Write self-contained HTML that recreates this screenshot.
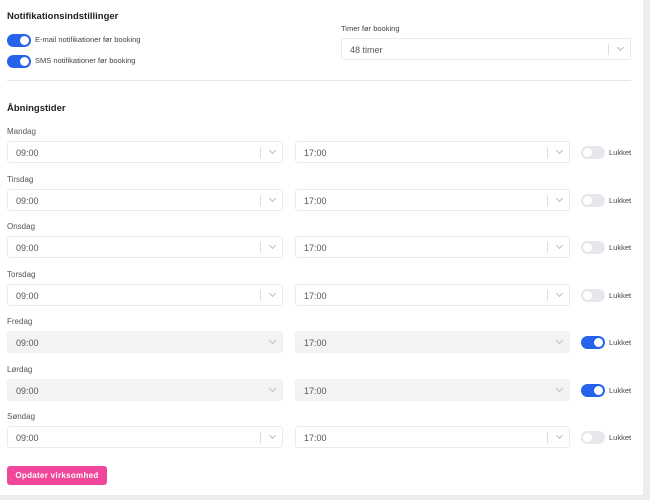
<!DOCTYPE html>
<html><head><meta charset="utf-8">
<style>
*{box-sizing:border-box;margin:0;padding:0}
body{width:650px;height:500px;background:#ededef;font-family:"Liberation Sans",sans-serif;color:#333;position:relative;overflow:hidden}
.card{position:absolute;left:0;top:0;width:643px;height:495px;background:#fff}
.abs{position:absolute}
.h{font-size:9.5px;font-weight:bold;color:#222}
.lbl{font-size:8px;color:#555}
.sm{font-size:7.5px;color:#444}
.tg{position:absolute;width:24px;height:13px;border-radius:7px;background:#2563eb}
.tg::after{content:"";position:absolute;right:2px;top:2px;width:9px;height:9px;border-radius:50%;background:#fff}
.tg.off{background:#e5e7eb}
.tg.off::after{left:2px;right:auto}
.sel{position:absolute;height:22px;border:1px solid #ebebeb;border-radius:3px;background:#fff;font-size:9px;color:#555;padding:6px 0 0 8px}
.sel.dis{background:#f2f3f5;border-color:#f0f0f0}
.sel .bar{position:absolute;right:21px;top:5px;width:1px;height:11px;background:#ddd}
.sel.dis .bar{display:none}
.sel .ch{position:absolute;right:7px;top:6px;width:5px;height:5px;border-right:1px solid #bbb;border-bottom:1px solid #bbb;transform:rotate(45deg)}
.btn{position:absolute;left:7px;top:466px;width:100px;height:19px;background:#f0479b;border-radius:3px;color:#fff;font-size:8px;font-weight:bold;text-align:center;line-height:19px;letter-spacing:.3px}
</style></head><body>
<div class="card">
<div class="abs h" style="left:7px;top:11px">Notifikationsindstillinger</div>
<div class="tg" style="left:7px;top:34px"></div><div class="abs sm" style="left:35px;top:35px">E-mail notifikationer før booking</div>
<div class="tg" style="left:7px;top:55px"></div><div class="abs sm" style="left:35px;top:56px">SMS notifikationer før booking</div>
<div class="abs sm" style="left:341px;top:24px">Timer før booking</div>
<div class="sel" style="left:341px;top:38px;width:290px">48 timer<span class="bar"></span><span class="ch"></span></div>
<div class="abs" style="left:7px;top:80px;width:624px;height:1px;background:#e6e6e6"></div>
<div class="abs h" style="left:7px;top:103px">Åbningstider</div>

<div class="abs lbl" style="left:7px;top:127px">Mandag</div>
<div class="sel" style="left:7px;top:141px;width:276px">09:00<span class="bar"></span><span class="ch"></span></div>
<div class="sel" style="left:295px;top:141px;width:275px">17:00<span class="bar"></span><span class="ch"></span></div>
<div class="tg off" style="left:581px;top:146px"></div><div class="abs sm" style="left:609px;top:148px">Lukket</div>

<div class="abs lbl" style="left:7px;top:175px">Tirsdag</div>
<div class="sel" style="left:7px;top:189px;width:276px">09:00<span class="bar"></span><span class="ch"></span></div>
<div class="sel" style="left:295px;top:189px;width:275px">17:00<span class="bar"></span><span class="ch"></span></div>
<div class="tg off" style="left:581px;top:194px"></div><div class="abs sm" style="left:609px;top:196px">Lukket</div>

<div class="abs lbl" style="left:7px;top:222px">Onsdag</div>
<div class="sel" style="left:7px;top:236px;width:276px">09:00<span class="bar"></span><span class="ch"></span></div>
<div class="sel" style="left:295px;top:236px;width:275px">17:00<span class="bar"></span><span class="ch"></span></div>
<div class="tg off" style="left:581px;top:241px"></div><div class="abs sm" style="left:609px;top:243px">Lukket</div>

<div class="abs lbl" style="left:7px;top:270px">Torsdag</div>
<div class="sel" style="left:7px;top:284px;width:276px">09:00<span class="bar"></span><span class="ch"></span></div>
<div class="sel" style="left:295px;top:284px;width:275px">17:00<span class="bar"></span><span class="ch"></span></div>
<div class="tg off" style="left:581px;top:289px"></div><div class="abs sm" style="left:609px;top:291px">Lukket</div>

<div class="abs lbl" style="left:7px;top:317px">Fredag</div>
<div class="sel dis" style="left:7px;top:331px;width:276px">09:00<span class="bar"></span><span class="ch"></span></div>
<div class="sel dis" style="left:295px;top:331px;width:275px">17:00<span class="bar"></span><span class="ch"></span></div>
<div class="tg" style="left:581px;top:336px"></div><div class="abs sm" style="left:609px;top:338px">Lukket</div>

<div class="abs lbl" style="left:7px;top:365px">Lørdag</div>
<div class="sel dis" style="left:7px;top:379px;width:276px">09:00<span class="bar"></span><span class="ch"></span></div>
<div class="sel dis" style="left:295px;top:379px;width:275px">17:00<span class="bar"></span><span class="ch"></span></div>
<div class="tg" style="left:581px;top:384px"></div><div class="abs sm" style="left:609px;top:386px">Lukket</div>

<div class="abs lbl" style="left:7px;top:412px">Søndag</div>
<div class="sel" style="left:7px;top:426px;width:276px">09:00<span class="bar"></span><span class="ch"></span></div>
<div class="sel" style="left:295px;top:426px;width:275px">17:00<span class="bar"></span><span class="ch"></span></div>
<div class="tg off" style="left:581px;top:431px"></div><div class="abs sm" style="left:609px;top:433px">Lukket</div>

<div class="btn">Opdater virksomhed</div>
</div>
</body></html>
